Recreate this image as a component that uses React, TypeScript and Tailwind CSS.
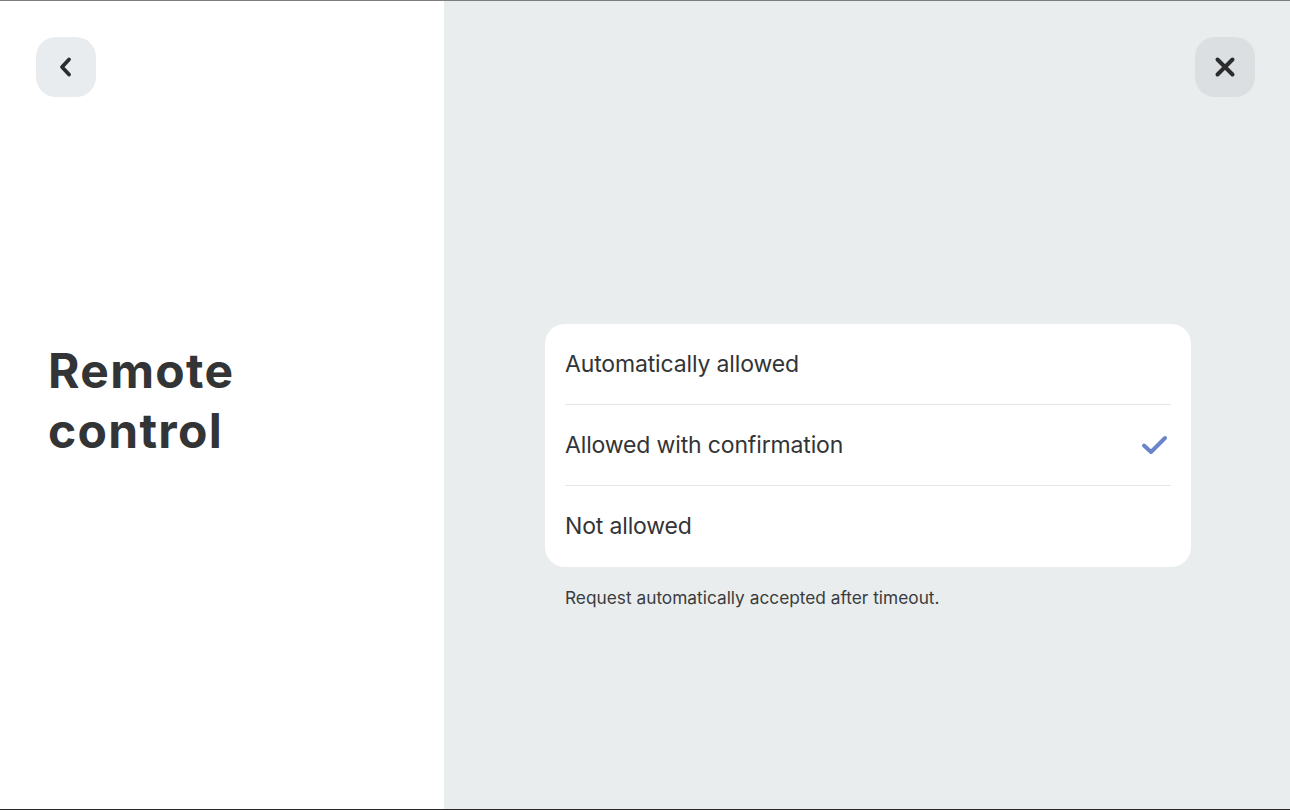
import React from 'react'

const options = ['Automatically allowed', 'Allowed with confirmation', 'Not allowed']

const App = () => {
  const selected = 1

  return (
    <div
      className="flex h-[810px] w-[1290px] border-t border-t-[#7d7d7d] border-b border-b-[#2a2a2a] text-[#2f3133]"
      style={{ fontFamily: 'Inter, "Noto Sans", sans-serif' }}
    >
      <div className="flex w-[444px] flex-col bg-white pl-9 pt-9">
        <button className="flex h-[60px] w-[60px] items-center justify-center rounded-[20px] bg-[#e9ecee]">
          <svg width="24" height="24" viewBox="0 0 24 24" fill="none">
            <path d="M15 4.5 L8 12 L15 19.5" stroke="#2b2c2e" strokeWidth="3.8" strokeLinecap="round" strokeLinejoin="round" />
          </svg>
        </button>
        <h1 className="mt-[244px] pl-3 text-[48px] font-bold leading-[60px] tracking-[1.3px] text-[#333435]">
          Remote
          <br />
          control
        </h1>
      </div>

      <div className="flex flex-1 flex-col bg-[#e9edee] pr-[35px] pt-9">
        <div className="flex justify-end">
          <button className="flex h-[60px] w-[60px] items-center justify-center rounded-[20px] bg-[#dcdfe1]">
            <svg width="26" height="26" viewBox="0 0 26 26" fill="none">
              <path d="M5.5 5.5 L20.5 20.5 M20.5 5.5 L5.5 20.5" stroke="#2b2c2e" strokeWidth="4" strokeLinecap="round" />
            </svg>
          </button>
        </div>

        <div className="mt-[227px] ml-[101px] mr-[64px]">
          <div className="rounded-[20px] bg-white px-5">
            {options.map((o, i) => (
              <div
                key={o}
                className={
                  'flex h-[81px] items-center justify-between ' +
                  (i < options.length - 1 ? 'border-b border-[#e4e6e8]' : '')
                }
              >
                <span className="text-[23px] tracking-[-0.15px] text-[#333436]">{o}</span>
                {i === selected && (
                  <svg width="28" height="22" viewBox="0 0 28 22" fill="none" className="mr-[2px]">
                    <path d="M3 11.5 L10 18 L24 4" stroke="#6a85cc" strokeWidth="4" strokeLinecap="round" strokeLinejoin="round" />
                  </svg>
                )}
              </div>
            ))}
          </div>
          <p className="mt-[18px] pl-5 text-[17.3px] text-[#3a3c3e]">Request automatically accepted after timeout.</p>
        </div>
      </div>
    </div>
  )
}

export default App
